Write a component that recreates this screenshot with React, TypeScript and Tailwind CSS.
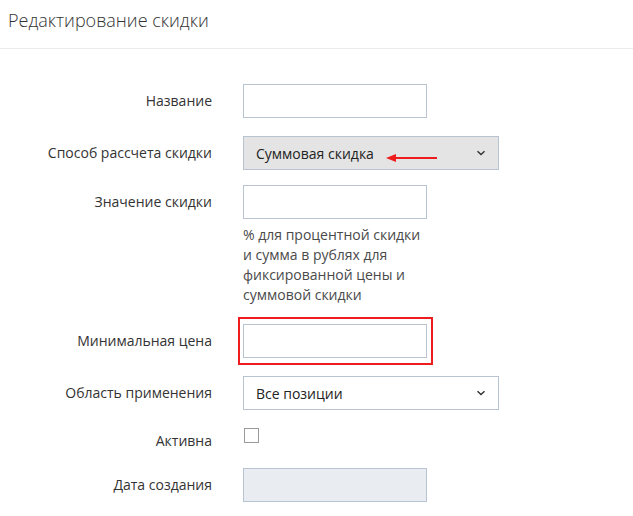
import React from "react";

const font = { fontFamily: '"Open Sans", "Noto Sans", sans-serif' };

function Chevron() {
  return (
    <svg width="10" height="6" viewBox="0 0 10 6" className="text-[#333]">
      <path d="M1.5 1.2 L5 4.6 L8.5 1.2" fill="none" stroke="currentColor" strokeWidth="1.4" />
    </svg>
  );
}

function Label({ children }: { children: React.ReactNode }) {
  return (
    <div className="w-[212px] shrink-0 text-right h-[34px] leading-[34px] text-[14px] text-[#333]">
      {children}
    </div>
  );
}

export default function App() {
  return (
    <div className="w-[633px] h-[516px] bg-white overflow-hidden" style={font}>
      <div className="h-[49px] border-b border-[#ececec] pl-[8px] pt-[6px]">
        <div className="text-[18px] font-light leading-[28px] text-[#333]">Редактирование скидки</div>
      </div>

      <div className="pt-[35px]">
        <div className="flex gap-[31px]">
          <Label>Название</Label>
          <div className="w-[184px] h-[34px] border border-[#b9c4d3] bg-white" />
        </div>

        <div className="flex gap-[31px] mt-[18px]">
          <Label>Способ рассчета скидки</Label>
          <div className="w-[256px] h-[34px] border border-[#b9c4d3] bg-[#e4e4e4] flex items-center pl-[12px] pr-[12px] relative">
            <span className="text-[14px] text-[#222]">Суммовая скидка</span>
            <svg width="52" height="10" viewBox="0 0 52 10" className="absolute left-[141px] top-[16px]">
              <path d="M10 5 L52 5" stroke="#ee1c1c" strokeWidth="2" />
              <path d="M1 5 L11 1 L11 9 Z" fill="#ee1c1c" />
            </svg>
            <span className="ml-auto flex items-center">
              <Chevron />
            </span>
          </div>
        </div>

        <div className="flex gap-[31px] mt-[15px]">
          <Label>Значение скидки</Label>
          <div>
            <div className="w-[184px] h-[34px] border border-[#b9c4d3] bg-white" />
            <div className="mt-[6px] w-[184px] text-[14px] leading-[20px] text-[#4a4a4a]">
              % для процентной скидки и сумма в рублях для фиксированной цены и суммовой скидки
            </div>
          </div>
        </div>

        <div className="flex gap-[31px] mt-[12px]">
          <div className="w-[212px] shrink-0 text-right h-[34px] leading-[34px] text-[14px] text-[#333] mt-[7px]">
            Минимальная цена
          </div>
          <div className="-ml-[5px] w-[195px] h-[48px] border-2 border-[#ee1c1c] pl-[3px] pt-[5px]">
            <div className="w-[184px] h-[34px] border border-[#b9c4d3] bg-white" />
          </div>
        </div>

        <div className="flex gap-[31px] mt-[11px]">
          <Label>Область применения</Label>
          <div className="w-[256px] h-[34px] border border-[#b9c4d3] bg-white flex items-center pl-[12px] pr-[12px]">
            <span className="text-[14px] text-[#222]">Все позиции</span>
            <span className="ml-auto flex items-center">
              <Chevron />
            </span>
          </div>
        </div>

        <div className="flex gap-[31px] mt-[14px]">
          <Label>Активна</Label>
          <div className="pt-[4px] pl-[1px]">
            <div className="w-[15px] h-[15px] border border-[#9a9a9a] bg-white" />
          </div>
        </div>

        <div className="flex gap-[31px] mt-[10px]">
          <Label>Дата создания</Label>
          <div className="w-[184px] h-[34px] border border-[#b9c4d3] bg-[#e9edf2]" />
        </div>
      </div>
    </div>
  );
}
